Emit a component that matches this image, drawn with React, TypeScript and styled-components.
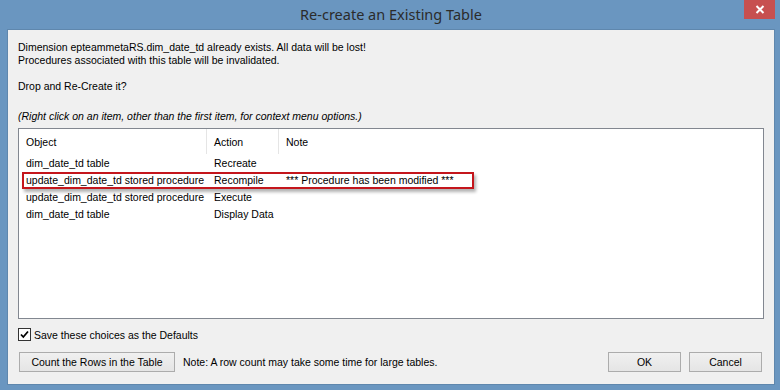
import styled, { createGlobalStyle } from "styled-components";

const rows = [
  { object: "dim_date_td table", action: "Recreate", note: "" },
  { object: "update_dim_date_td stored procedure", action: "Recompile", note: "*** Procedure has been modified ***" },
  { object: "update_dim_date_td stored procedure", action: "Execute", note: "" },
  { object: "dim_date_td table", action: "Display Data", note: "" },
];

const GlobalStyle = createGlobalStyle`
  html, body {
    margin: 0;
    padding: 0;
  }
  body {
    font-family: "Liberation Sans", Arial, sans-serif;
    font-size: 10.5px;
    color: #000;
  }
`;

const Window = styled.div`
  width: 780px;
  height: 390px;
  background: #6a96c0;
  display: flex;
  flex-direction: column;
  overflow: hidden;
`;

const TitleBar = styled.div`
  height: 29px;
  display: flex;
  align-items: flex-start;
  position: relative;
`;

const Title = styled.div`
  flex: 1;
  text-align: center;
  font-family: "Noto Sans", "Open Sans", sans-serif;
  font-size: 14.5px;
  line-height: 28px;
  color: #2b2b2b;
  padding-left: 2px;
`;

const CloseButton = styled.div`
  position: absolute;
  top: 0;
  right: 5px;
  width: 31px;
  height: 19px;
  background: #c75050;
  display: flex;
  align-items: center;
  justify-content: center;
`;

const Client = styled.div`
  flex: 1;
  margin: 0 5px 5px 7px;
  background: #f0f0f0;
  border: 1px solid #5f87ad;
  padding: 11px 10px 0 10px;
  display: flex;
  flex-direction: column;
`;

const Message = styled.div`
  line-height: 13px;
  white-space: pre;
`;

const Hint = styled.div`
  margin-top: 17px;
  font-style: italic;
  line-height: 13px;
`;

const ListBox = styled.div`
  margin-top: 5px;
  height: 189px;
  border: 1px solid #828790;
  background: #fff;
  position: relative;
`;

const Row = styled.div<{ header?: boolean }>`
  display: grid;
  grid-template-columns: 188px 72px 1fr;
  height: ${(p) => (p.header ? "25px" : "17px")};
  align-items: center;
`;

const Cell = styled.div<{ header?: boolean }>`
  padding-left: 7px;
  height: 100%;
  display: flex;
  align-items: center;
  white-space: nowrap;
  overflow: hidden;
  border-right: ${(p) => (p.header ? "1px solid #e5e5e5" : "none")};
  &:last-child {
    border-right: none;
  }
`;

const Highlight = styled.div`
  position: absolute;
  left: 3px;
  top: 43px;
  width: 452px;
  height: 17px;
  border: 2px solid #c4161c;
  box-sizing: border-box;
  box-shadow: 2px 3px 3px rgba(0, 0, 0, 0.3);
`;

const CheckRow = styled.label`
  margin-top: 9px;
  display: flex;
  align-items: center;
  gap: 3px;
  height: 13px;
`;

const CheckBox = styled.span`
  width: 11px;
  height: 11px;
  border: 1px solid #333;
  background: #fff;
  display: flex;
  align-items: center;
  justify-content: center;
`;

const ButtonRow = styled.div`
  margin-top: 11px;
  display: flex;
  align-items: center;
  padding-right: 2px;
`;

const Button = styled.button<{ width: number }>`
  width: ${(p) => p.width}px;
  height: 20px;
  margin: 0 0 0 1px;
  padding: 0;
  border: 1px solid #acacac;
  background: linear-gradient(#f0f0f0, #e5e5e5);
  font-family: "Liberation Sans", Arial, sans-serif;
  font-size: 10.5px;
  color: #000;
`;

const Note = styled.span`
  margin-left: 8px;
  flex: 1;
`;

const RightButtons = styled.div`
  display: flex;
  gap: 7px;
`;

export default function App() {
  return (
    <Window>
      <GlobalStyle />
      <TitleBar>
        <Title>Re-create an Existing Table</Title>
        <CloseButton>
          <svg width="10" height="9" viewBox="0 0 10 9">
            <path d="M1.5 1 L8.5 8 M8.5 1 L1.5 8" stroke="#fff" strokeWidth="2" />
          </svg>
        </CloseButton>
      </TitleBar>
      <Client>
        <Message>
          {"Dimension epteammetaRS.dim_date_td already exists. All data will be lost!\nProcedures associated with this table will be invalidated.\n\nDrop and Re-Create it?"}
        </Message>
        <Hint>(Right click on an item, other than the first item, for context menu options.)</Hint>
        <ListBox>
          <Row header>
            <Cell header>Object</Cell>
            <Cell header>Action</Cell>
            <Cell header>Note</Cell>
          </Row>
          {rows.map((r, i) => (
            <Row key={i}>
              <Cell>{r.object}</Cell>
              <Cell>{r.action}</Cell>
              <Cell>{r.note}</Cell>
            </Row>
          ))}
          <Highlight />
        </ListBox>
        <CheckRow>
          <CheckBox>
            <svg width="9" height="9" viewBox="0 0 9 9">
              <path d="M1 4.5 L3.3 7 L8 1.5" stroke="#000" strokeWidth="1.8" fill="none" />
            </svg>
          </CheckBox>
          Save these choices as the Defaults
        </CheckRow>
        <ButtonRow>
          <Button width={156}>Count the Rows in the Table</Button>
          <Note>Note: A row count may take some time for large tables.</Note>
          <RightButtons>
            <Button width={73}>OK</Button>
            <Button width={73}>Cancel</Button>
          </RightButtons>
        </ButtonRow>
      </Client>
    </Window>
  );
}
